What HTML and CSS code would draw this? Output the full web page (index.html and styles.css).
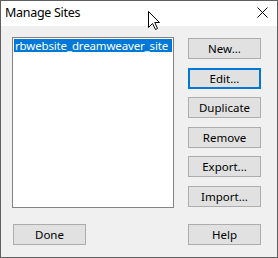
FILE: index.html
```html
<!DOCTYPE html>
<html lang="en">
<head>
    <meta charset="UTF-8">
    <title>Manage Sites</title>
    <link rel="stylesheet" href="styles.css">
</head>
<body>
    <div class="window">
        <div class="titlebar">
            <span class="title">Manage Sites</span>
            <svg class="close" width="11" height="11" viewBox="0 0 11 11">
                <path d="M0.5 0.5 L10.5 10.5 M10.5 0.5 L0.5 10.5" stroke="#000" stroke-width="1"/>
            </svg>
        </div>
        <div class="content">
            <div class="main">
                <div class="sitelist">
                    <div class="item selected">rbwebsite_dreamweaver_site</div>
                </div>
                <div class="actions">
                    <button class="btn">New...</button>
                    <button class="btn focused">Edit...</button>
                    <button class="btn">Duplicate</button>
                    <button class="btn">Remove</button>
                    <button class="btn">Export...</button>
                    <button class="btn">Import...</button>
                </div>
            </div>
            <div class="footer">
                <button class="btn">Done</button>
                <button class="btn">Help</button>
            </div>
        </div>
        <!-- mouse pointer over the title bar -->
        <svg class="cursor" width="13" height="20" viewBox="0 0 13 20">
            <path d="M0.5 0.5 L0.5 16.5 L4.5 12.5 L7.5 18.5 L9.5 17.5 L6.8 11.5 L11.5 11.5 Z" fill="#fff" stroke="#000" stroke-width="1" stroke-linejoin="miter"/>
        </svg>
    </div>
</body>
</html>
```
FILE: styles.css
```css
body {
    margin: 0;
    font-family: "Noto Sans", sans-serif;
    font-size: 11.5px;
    color: #000;
}
.window {
    position: relative;
    width: 278px;
    height: 258px;
    box-sizing: border-box;
    border: 1px solid #5f5f5f;
    background: #f0f0f0;
}
.titlebar {
    height: 25px;
    background: #fff;
    display: flex;
    align-items: center;
    justify-content: space-between;
    padding: 0 9px 0 4px;
}
.title {
    font-size: 12.5px;
    letter-spacing: -0.3px;
    margin-top: -2px;
}
.close {
    display: block;
    margin-top: -3px;
}
.content {
    padding: 11px 16px 0 11px;
}
.main {
    display: flex;
    gap: 14px;
}
.sitelist {
    width: 162px;
    height: 171px;
    box-sizing: border-box;
    border: 1px solid #828282;
    background: #fff;
    padding: 1px;
}
.item {
    height: 13px;
    line-height: 14px;
    padding-left: 1px;
    font-size: 11.5px;
    letter-spacing: -0.15px;
    white-space: nowrap;
    overflow: hidden;
}
.selected {
    background: #0078d7;
    color: #fff;
}
.actions {
    display: flex;
    flex-direction: column;
    gap: 8.6px;
    padding-top: 1px;
}
.btn {
    width: 73px;
    height: 21px;
    box-sizing: border-box;
    border: 1px solid #adadad;
    background: #e1e1e1;
    font-family: "Noto Sans", sans-serif;
    font-size: 11.5px;
    color: #000;
    padding: 0;
}
.btn.focused {
    border: 2px solid #0078d7;
}
.footer {
    display: flex;
    justify-content: space-between;
    margin-top: 16px;
    padding-left: 1px;
}
.cursor {
    position: absolute;
    left: 147px;
    top: 10px;
}
```
